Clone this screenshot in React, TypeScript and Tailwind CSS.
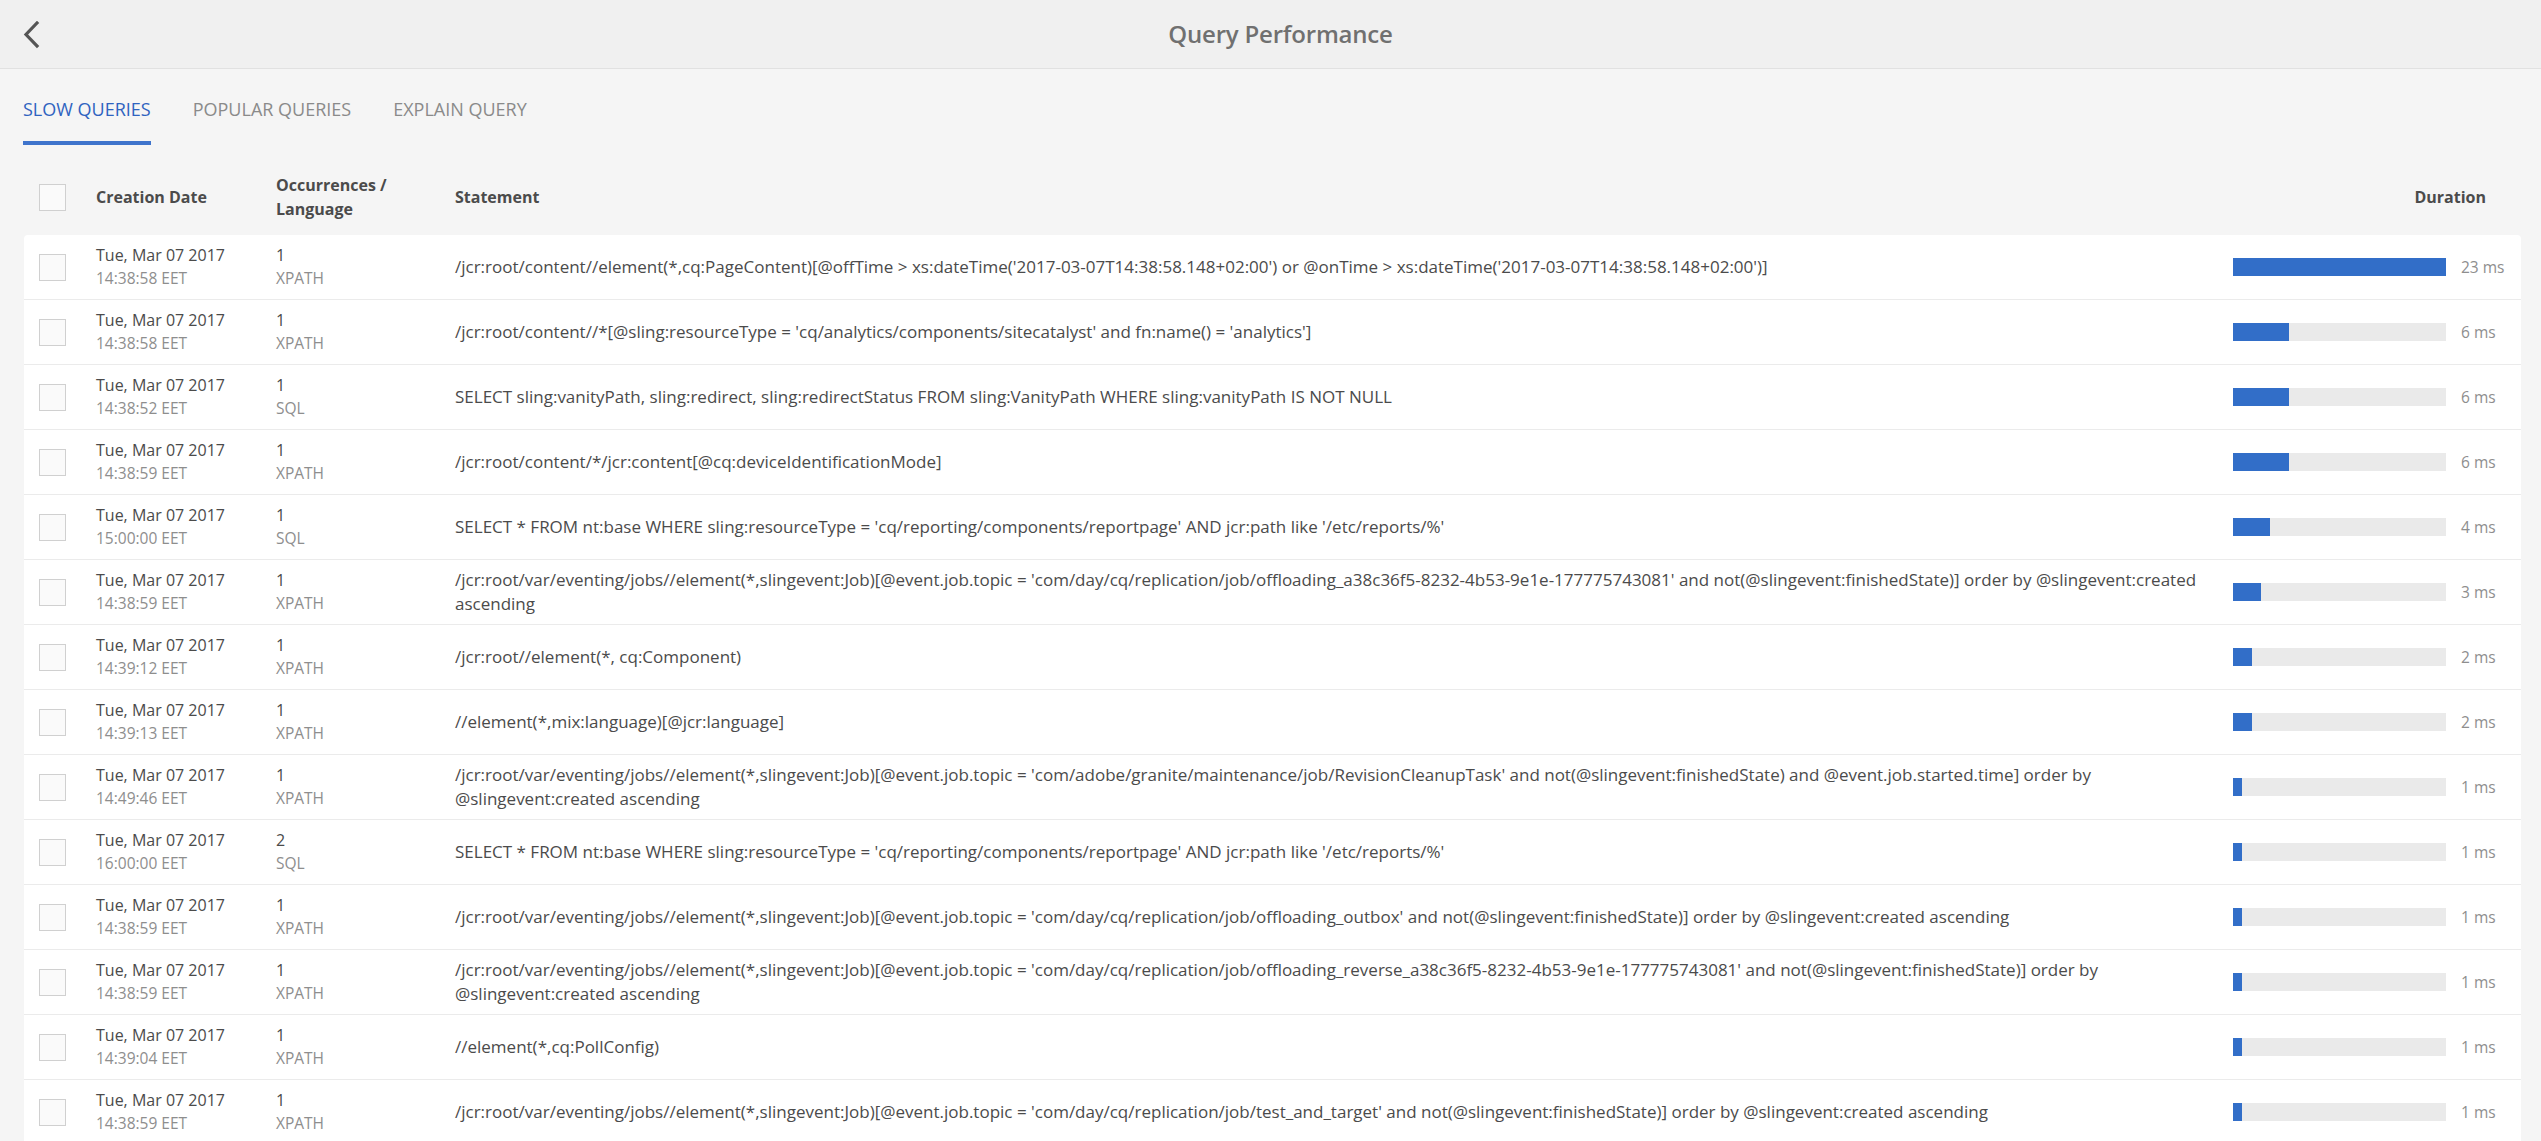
import React from "react";

type Row = {
  time: string;
  count: number;
  lang: string;
  statement: string;
  ms: number;
};

const rows: Row[] = [
  { time: "14:38:58 EET", count: 1, lang: "XPATH", statement: "/jcr:root/content//element(*,cq:PageContent)[@offTime > xs:dateTime('2017-03-07T14:38:58.148+02:00') or @onTime > xs:dateTime('2017-03-07T14:38:58.148+02:00')]", ms: 23 },
  { time: "14:38:58 EET", count: 1, lang: "XPATH", statement: "/jcr:root/content//*[@sling:resourceType = 'cq/analytics/components/sitecatalyst' and fn:name() = 'analytics']", ms: 6 },
  { time: "14:38:52 EET", count: 1, lang: "SQL", statement: "SELECT sling:vanityPath, sling:redirect, sling:redirectStatus FROM sling:VanityPath WHERE sling:vanityPath IS NOT NULL", ms: 6 },
  { time: "14:38:59 EET", count: 1, lang: "XPATH", statement: "/jcr:root/content/*/jcr:content[@cq:deviceIdentificationMode]", ms: 6 },
  { time: "15:00:00 EET", count: 1, lang: "SQL", statement: "SELECT * FROM nt:base WHERE sling:resourceType = 'cq/reporting/components/reportpage' AND jcr:path like '/etc/reports/%'", ms: 4 },
  { time: "14:38:59 EET", count: 1, lang: "XPATH", statement: "/jcr:root/var/eventing/jobs//element(*,slingevent:Job)[@event.job.topic = 'com/day/cq/replication/job/offloading_a38c36f5-8232-4b53-9e1e-177775743081' and not(@slingevent:finishedState)] order by @slingevent:created ascending", ms: 3 },
  { time: "14:39:12 EET", count: 1, lang: "XPATH", statement: "/jcr:root//element(*, cq:Component)", ms: 2 },
  { time: "14:39:13 EET", count: 1, lang: "XPATH", statement: "//element(*,mix:language)[@jcr:language]", ms: 2 },
  { time: "14:49:46 EET", count: 1, lang: "XPATH", statement: "/jcr:root/var/eventing/jobs//element(*,slingevent:Job)[@event.job.topic = 'com/adobe/granite/maintenance/job/RevisionCleanupTask' and not(@slingevent:finishedState) and @event.job.started.time] order by @slingevent:created ascending", ms: 1 },
  { time: "16:00:00 EET", count: 2, lang: "SQL", statement: "SELECT * FROM nt:base WHERE sling:resourceType = 'cq/reporting/components/reportpage' AND jcr:path like '/etc/reports/%'", ms: 1 },
  { time: "14:38:59 EET", count: 1, lang: "XPATH", statement: "/jcr:root/var/eventing/jobs//element(*,slingevent:Job)[@event.job.topic = 'com/day/cq/replication/job/offloading_outbox' and not(@slingevent:finishedState)] order by @slingevent:created ascending", ms: 1 },
  { time: "14:38:59 EET", count: 1, lang: "XPATH", statement: "/jcr:root/var/eventing/jobs//element(*,slingevent:Job)[@event.job.topic = 'com/day/cq/replication/job/offloading_reverse_a38c36f5-8232-4b53-9e1e-177775743081' and not(@slingevent:finishedState)] order by @slingevent:created ascending", ms: 1 },
  { time: "14:39:04 EET", count: 1, lang: "XPATH", statement: "//element(*,cq:PollConfig)", ms: 1 },
  { time: "14:38:59 EET", count: 1, lang: "XPATH", statement: "/jcr:root/var/eventing/jobs//element(*,slingevent:Job)[@event.job.topic = 'com/day/cq/replication/job/test_and_target' and not(@slingevent:finishedState)] order by @slingevent:created ascending", ms: 1 },
];

const MAX_MS = 23;
const cols = "grid grid-cols-[72px_180px_179px_1fr_228px_60px]";

function Checkbox() {
  return <div className="ml-[15px] h-[27px] w-[27px] border border-[#d0d0d0] bg-[#fafafa]" />;
}

export default function App() {
  return (
    <div className="min-h-screen bg-[#f5f5f5] font-['Open_Sans',sans-serif] text-[#4b4b4b]">
      <header className="relative flex h-[69px] items-center justify-center border-b border-[#e1e1e1] bg-[#f0f0f0] pl-[20px]">
        <button className="absolute left-[22px] top-[21px] p-0">
          <svg width="20" height="28" viewBox="0 0 20 28" fill="none">
            <path d="M15 2 L4 13.5 L15 25" stroke="#555" strokeWidth="3.2" strokeLinecap="square" />
          </svg>
        </button>
        <h1 className="text-[24px] font-semibold tracking-[-0.2px] text-[#707070]">Query Performance</h1>
      </header>

      <nav className="flex gap-[42px] pl-[23px]">
        <div className="border-b-4 border-[#3f74cc] pb-[20px] pt-[28px] text-[18px] leading-[24px] text-[#2f63c0]">SLOW QUERIES</div>
        <div className="border-b-4 border-transparent pb-[20px] pt-[28px] text-[18px] leading-[24px] text-[#8a8a8a]">POPULAR QUERIES</div>
        <div className="border-b-4 border-transparent pb-[20px] pt-[28px] text-[18px] leading-[24px] text-[#8a8a8a]">EXPLAIN QUERY</div>
      </nav>

      <div className="ml-[24px] mr-[20px]">
        <div className={`${cols} mt-[14px] h-[76px] items-center text-[16px] font-bold leading-[24px] text-[#4b4b4b]`}>
          <Checkbox />
          <div>Creation Date</div>
          <div>
            Occurrences /<br />Language
          </div>
          <div>Statement</div>
          <div className="col-span-2 pr-[35px] text-right">Duration</div>
        </div>

        <div className="rounded-[4px] bg-white">
          {rows.map((r, i) => (
            <div key={i} className={`${cols} h-[65px] items-center border-b border-[#ebebeb] text-[17px] leading-[24px]`}>
              <Checkbox />
              <div className="leading-[23px]">
                <div className="text-[16px] text-[#4b4b4b]">Tue, Mar 07 2017</div>
                <div className="text-[15.5px] text-[#8e8e8e]">{r.time}</div>
              </div>
              <div className="leading-[23px]">
                <div className="text-[16px] text-[#4b4b4b]">{r.count}</div>
                <div className="text-[15.5px] text-[#8e8e8e]">{r.lang}</div>
              </div>
              <div className="pr-[18px] text-[#4b4b4b]">{r.statement}</div>
              <div className="h-[18px] w-[213px] bg-[#eaeaea]">
                <div className="h-full bg-[#326ec8]" style={{ width: `${(r.ms / MAX_MS) * 100}%` }} />
              </div>
              <div className="text-[15.5px] text-[#8e8e8e]">{r.ms} ms</div>
            </div>
          ))}
        </div>
      </div>
    </div>
  );
}
